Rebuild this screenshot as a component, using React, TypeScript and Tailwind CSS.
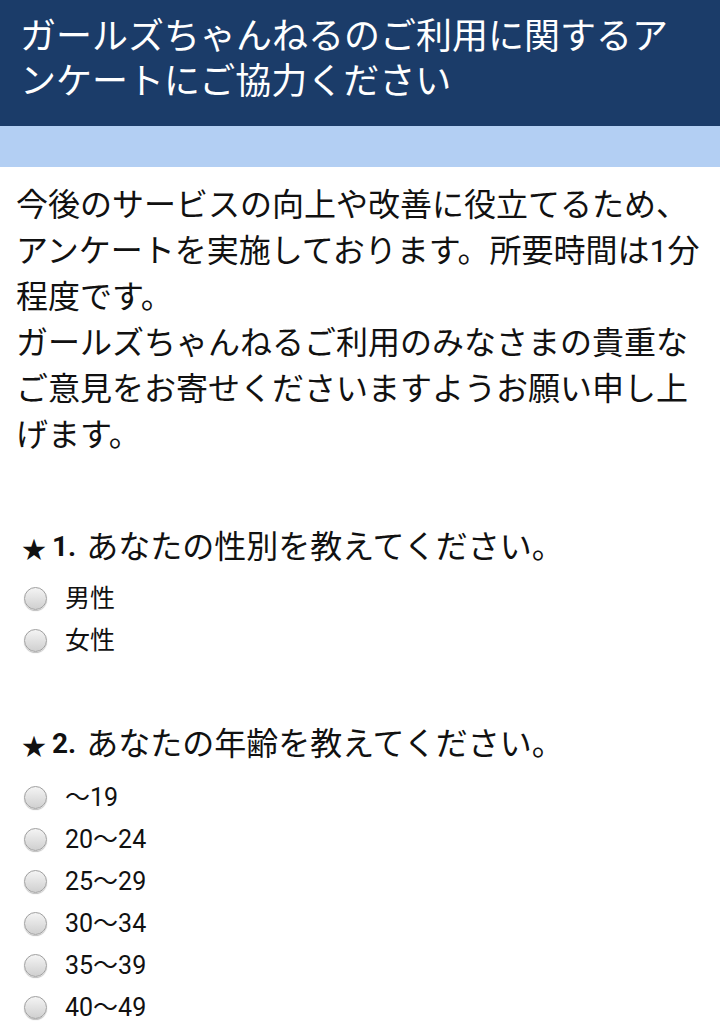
import React from 'react';

const font = { fontFamily: 'Roboto, "Noto Sans CJK JP", sans-serif' };

const Radio: React.FC<{ label: string }> = ({ label }) => (
  <label className="flex h-[42px] items-center">
    <span className="ml-[24px] h-[23px] w-[23px] shrink-0 rounded-full border border-[#a0a0a0] bg-gradient-to-b from-[#f4f4f4] to-[#d0d0d0] shadow-[0_1px_1px_rgba(0,0,0,0.25)]" />
    <span className="ml-[18px] text-[25px] leading-none text-[#111]">{label}</span>
  </label>
);

const Question: React.FC<{ no: number; text: string; options: string[]; className: string; gap: string }> = ({ no, text, options, className, gap }) => (
  <div className={className}>
    <h3 className="flex h-[40px] items-center pl-[22px] text-[#111]">
      <span className="mt-[5px] text-[24px] leading-none">★</span>
      <span className="ml-[6px] text-[28px] font-bold">{no}.</span>
      <span className="ml-[10px] text-[32px]">{text}</span>
    </h3>
    <div className={gap}>
      {options.map(o => (
        <Radio key={o} label={o} />
      ))}
    </div>
  </div>
);

export default function App() {
  return (
    <div className="min-h-[1027px] bg-white" style={font}>
      <header className="bg-[#1b3c69] pl-[20px] pr-[20px] pt-[15px] pb-[21px] text-[36px] leading-[45px] text-white">
        ガールズちゃんねるのご利用に関するアンケートにご協力ください
      </header>
      <div className="h-[41px] bg-[#b3cff3]" />
      <p className="pl-[16px] pr-[10px] pt-[15px] text-[32px] leading-[46px] text-[#111]">
        今後のサービスの向上や改善に役立てるため、アンケートを実施しております。所要時間は1分程度です。
        <br />
        ガールズちゃんねるご利用のみなさまの貴重なご意見をお寄せくださいますようお願い申し上げます。
      </p>
      <Question className="mt-[69px]" gap="mt-[10px]" no={1} text="あなたの性別を教えてください。" options={['男性', '女性']} />
      <Question
        className="mt-[63px]"
        gap="mt-[12px]"
        no={2}
        text="あなたの年齢を教えてください。"
        options={['〜19', '20〜24', '25〜29', '30〜34', '35〜39', '40〜49']}
      />
    </div>
  );
}
